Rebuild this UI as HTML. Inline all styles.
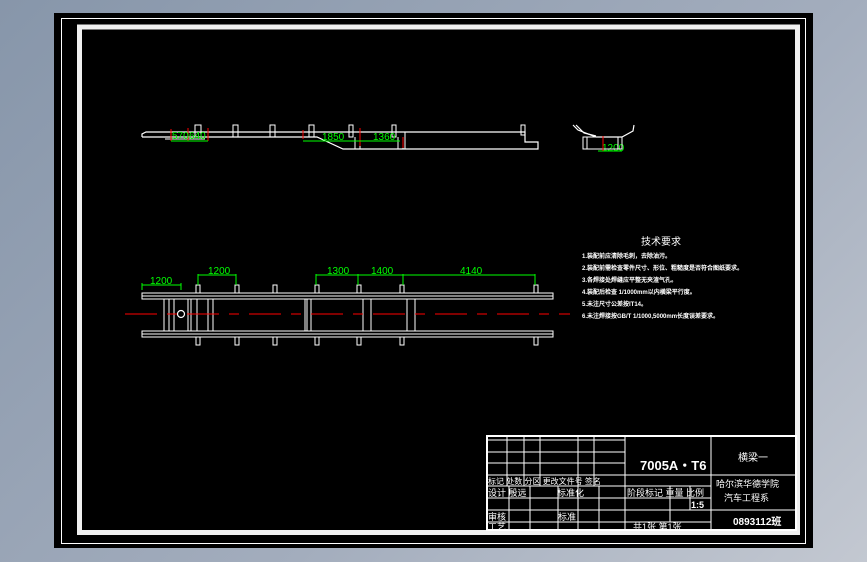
<!DOCTYPE html>
<html><head><meta charset="utf-8"><style>
html,body{margin:0;padding:0;width:867px;height:562px;overflow:hidden;background:linear-gradient(135deg,#8796aa 0%,#a3adbd 60%,#c3c8d1 100%);}
svg{position:absolute;left:0;top:0}
text{font-family:"Liberation Sans","WenQuanYi Zen Hei",sans-serif;}
</style></head><body>
<svg width="867" height="562" viewBox="0 0 867 562" shape-rendering="crispEdges">
<rect x="54" y="13" width="759" height="535" fill="#000"/>
<rect x="61.5" y="18.5" width="744" height="525" fill="none" stroke="#fff" stroke-width="1"/>
<rect x="79.5" y="27" width="718" height="505.5" fill="none" stroke="#f0f0f0" stroke-width="5"/>

<!-- side view -->
<g stroke="#fff" stroke-width="1.2" fill="none">
<polyline points="142,137 142,134 146,132 525,132 525,142 538,142 538,149 343,149 317,137 142,137" shape-rendering="auto"/>
<line x1="165" y1="139" x2="205" y2="139"/>
<line x1="355" y1="137" x2="355" y2="149"/><line x1="360" y1="137" x2="360" y2="149"/>
<line x1="398" y1="137" x2="398" y2="149"/><line x1="403" y1="137" x2="403" y2="149"/>
<line x1="405" y1="132" x2="405" y2="149"/>
<g>
<rect x="195" y="125" width="6" height="12"/><rect x="233" y="125" width="5" height="12"/><rect x="270" y="125" width="5" height="12"/>
<rect x="309" y="125" width="5" height="12"/><rect x="349" y="125" width="4" height="12"/><rect x="392" y="125" width="4" height="12"/><rect x="521" y="125" width="4" height="10"/>
</g>
</g>
<g stroke="#f00" stroke-width="1.2">
<line x1="171" y1="129" x2="171" y2="141"/><line x1="188" y1="128" x2="188" y2="141"/><line x1="208" y1="128" x2="208" y2="141"/>
<line x1="303" y1="130" x2="303" y2="139"/><line x1="360" y1="128" x2="360" y2="146"/><line x1="403" y1="137" x2="403" y2="148"/>
</g>
<g stroke="#0f0" stroke-width="1.2" fill="none">
<line x1="171" y1="141" x2="208" y2="141"/><line x1="303" y1="141" x2="400" y2="141"/>
<line x1="598" y1="151" x2="622" y2="151"/>
</g>
<g fill="#0f0" font-size="10">
<text x="172" y="139">570</text><text x="189" y="139">640</text>
<text x="322" y="140">1850</text><text x="373" y="140">1360</text>
<text x="602" y="151">1200</text>
</g>
<!-- cross section -->
<g stroke="#fff" fill="none" stroke-width="1.2">
<polyline points="573,125 578,130 596,137 622,137 633,131 634,125" shape-rendering="auto"/>
<polyline points="576,125 584,133 596,136" shape-rendering="auto"/>
<rect x="583" y="137" width="39" height="12"/>
<line x1="587" y1="137" x2="587" y2="149"/><line x1="618" y1="137" x2="618" y2="149"/>
</g>
<line x1="603" y1="136" x2="603" y2="151" stroke="#f00"/>

<!-- plan view -->
<g stroke="#fff" stroke-width="1.2" fill="none">
<rect x="142" y="293" width="411" height="6"/><line x1="142" y1="296" x2="553" y2="296"/>
<rect x="142" y="331" width="411" height="6"/><line x1="142" y1="334" x2="553" y2="334"/>
<g>
<line x1="164" y1="299" x2="164" y2="331"/><line x1="169" y1="299" x2="169" y2="331"/><line x1="174" y1="299" x2="174" y2="331"/>
<line x1="188" y1="299" x2="188" y2="331"/><line x1="191" y1="299" x2="191" y2="331"/><line x1="197" y1="299" x2="197" y2="331"/>
<line x1="208" y1="299" x2="208" y2="331"/><line x1="213" y1="299" x2="213" y2="331"/>
<line x1="305" y1="299" x2="305" y2="331"/><line x1="307" y1="299" x2="307" y2="331"/><line x1="311" y1="299" x2="311" y2="331"/>
<line x1="363" y1="299" x2="363" y2="331"/><line x1="371" y1="299" x2="371" y2="331"/>
<line x1="407" y1="299" x2="407" y2="331"/><line x1="415" y1="299" x2="415" y2="331"/>
</g>
<g>
<rect x="196" y="285" width="4" height="8"/><rect x="235" y="285" width="4" height="8"/><rect x="273" y="285" width="4" height="8"/>
<rect x="315" y="285" width="4" height="8"/><rect x="357" y="285" width="4" height="8"/><rect x="400" y="285" width="4" height="8"/><rect x="534" y="285" width="4" height="8"/>
<rect x="196" y="337" width="4" height="8"/><rect x="235" y="337" width="4" height="8"/><rect x="273" y="337" width="4" height="8"/>
<rect x="315" y="337" width="4" height="8"/><rect x="357" y="337" width="4" height="8"/><rect x="400" y="337" width="4" height="8"/><rect x="534" y="337" width="4" height="8"/>
</g>
<circle cx="181" cy="314" r="3.5" shape-rendering="auto"/>
</g>
<line x1="125" y1="314" x2="570" y2="314" stroke="#f00" stroke-width="1.2" stroke-dasharray="32,10,10,10"/>
<g stroke="#0f0" stroke-width="1.2">
<line x1="142" y1="285" x2="181" y2="285"/><line x1="142" y1="283" x2="142" y2="290"/><line x1="181" y1="283" x2="181" y2="290"/>
<line x1="198" y1="275" x2="236" y2="275"/><line x1="198" y1="274" x2="198" y2="285"/><line x1="236" y1="274" x2="236" y2="285"/>
<line x1="316" y1="275" x2="535" y2="275"/><line x1="316" y1="274" x2="316" y2="285"/><line x1="358" y1="274" x2="358" y2="285"/><line x1="403" y1="274" x2="403" y2="285"/><line x1="535" y1="274" x2="535" y2="285"/>
</g>
<g fill="#0f0" font-size="10">
<text x="150" y="284">1200</text><text x="208" y="274">1200</text><text x="327" y="274">1300</text><text x="371" y="274">1400</text><text x="460" y="274">4140</text>
</g>

<!-- tech requirements -->
<g fill="#fff" font-size="6" font-weight="bold">
<text x="641" y="245" font-size="10" font-weight="normal">技术要求</text>
<text x="582" y="258">1.装配前应清除毛刺，去除油污。</text>
<text x="582" y="270">2.装配前需检查零件尺寸、形位、粗糙度是否符合图纸要求。</text>
<text x="582" y="282">3.各焊接处焊缝应平整无夹渣气孔。</text>
<text x="582" y="294">4.装配后检查 1/1000mm以内横梁平行度。</text>
<text x="582" y="306">5.未注尺寸公差按IT14。</text>
<text x="582" y="318">6.未注焊接按GB/T 1/1000,5000mm长度误差要求。</text>
</g>

<!-- title block -->
<g stroke="#fff" stroke-width="1.2" fill="none">
<rect x="487" y="436" width="309" height="94" stroke-width="2"/>
<line x1="487" y1="440" x2="625" y2="440"/>
<line x1="487" y1="452" x2="625" y2="452"/>
<line x1="487" y1="463" x2="625" y2="463"/>
<line x1="487" y1="475" x2="796" y2="475"/>
<line x1="487" y1="486" x2="711" y2="486"/>
<line x1="487" y1="498" x2="711" y2="498"/>
<line x1="487" y1="510" x2="796" y2="510"/>
<line x1="487" y1="522" x2="711" y2="522"/>
<line x1="507" y1="436" x2="507" y2="486"/><line x1="524" y1="436" x2="524" y2="486"/><line x1="540" y1="436" x2="540" y2="486"/>
<line x1="578" y1="436" x2="578" y2="530"/><line x1="594" y1="436" x2="594" y2="486"/>
<line x1="509" y1="486" x2="509" y2="530"/><line x1="530" y1="486" x2="530" y2="530"/><line x1="558" y1="486" x2="558" y2="530"/><line x1="599" y1="486" x2="599" y2="530"/>
<line x1="625" y1="436" x2="625" y2="530"/><line x1="670" y1="486" x2="670" y2="522"/><line x1="690" y1="486" x2="690" y2="510"/>
<line x1="711" y1="436" x2="711" y2="530"/>
</g>
<g fill="#fff" font-size="9">
<text x="640" y="470" font-size="13" font-weight="bold">7005A・T6</text>
<text x="738" y="461" font-size="10">横梁一</text>
<text x="716" y="487" font-size="9">哈尔滨华德学院</text>
<text x="724" y="501" font-size="9">汽车工程系</text>
<text x="733" y="525" font-size="10" font-weight="bold">0893112班</text>
<text x="488" y="484" font-size="8">标记 处数 分区 更改文件号 签名</text>
<text x="488" y="496">设计 殷远</text><text x="557" y="496">标准化</text>
<text x="627" y="496">阶段标记  重量  比例</text>
<text x="691" y="508" font-weight="bold">1:5</text>
<text x="488" y="520">审核</text><text x="558" y="520">标准</text>
<text x="488" y="530">工艺</text>
<text x="633" y="530">共1张 第1张</text>
</g>
</svg>
</body></html>
